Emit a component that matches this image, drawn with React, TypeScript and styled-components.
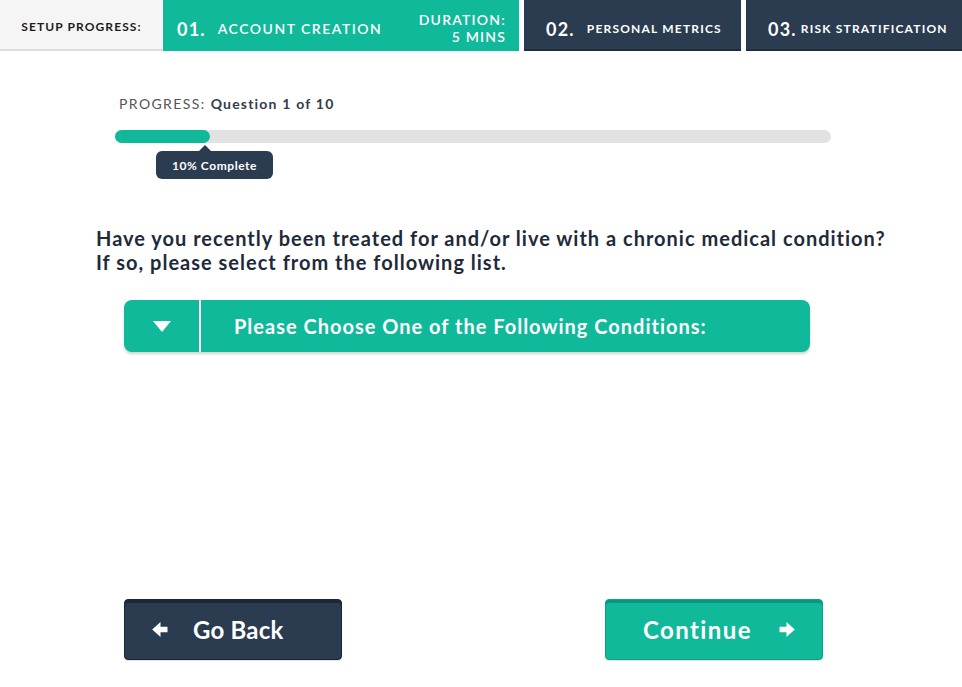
import React from "react";
import styled, { createGlobalStyle } from "styled-components";

const GREEN = "#0fb999";
const NAVY = "#2b3b50";

const Global = createGlobalStyle`
  html, body { margin: 0; padding: 0; background: #ffffff; }
  body { font-family: Lato, "Open Sans", sans-serif; color: #1f2b3a; }
  * { box-sizing: border-box; }
`;

const Page = styled.div`
  width: 962px;
  height: 687px;
  display: flex;
  flex-direction: column;
  overflow: hidden;
`;

const Header = styled.header`
  display: flex;
  height: 51px;
  gap: 5px;
`;

const SetupLabel = styled.div`
  width: 163px;
  background: #f5f5f5;
  box-shadow: inset 0 -2px 0 #dcdcdc;
  display: flex;
  align-items: center;
  justify-content: center;
  padding-top: 2px;
  font-size: 12px;
  font-weight: 700;
  letter-spacing: 1.1px;
  color: #1c1c1c;
  margin-right: -5px;
`;

const Step = styled.div<{ $active?: boolean; $w: number }>`
  width: ${(p) => p.$w}px;
  background: ${(p) => (p.$active ? GREEN : NAVY)};
  box-shadow: inset 0 -2px 0 ${(p) => (p.$active ? GREEN : "#1f2c3d")};
  color: #fff;
  display: flex;
  align-items: center;
  padding: 6px ${(p) => (p.$active ? 13 : 0)}px 0 ${(p) => (p.$active ? 14 : 22)}px;
`;

const StepNum = styled.span<{ $gap?: number }>`
  font-size: 18px;
  font-weight: 700;
  letter-spacing: 1.2px;
  margin-right: ${(p) => p.$gap ?? 12}px;
`;

const StepName = styled.span<{ $big?: boolean }>`
  font-size: ${(p) => (p.$big ? 14 : 12)}px;
  font-weight: ${(p) => (p.$big ? 600 : 700)};
  letter-spacing: ${(p) => (p.$big ? 1.5 : 1.2)}px;
`;

const Duration = styled.div`
  margin-left: auto;
  text-align: right;
  font-size: 14px;
  font-weight: 600;
  line-height: 17px;
  letter-spacing: 1.2px;
  margin-top: -1px;
`;

const Content = styled.main`
  flex: 1;
  display: flex;
  flex-direction: column;
  padding: 0 0 0 96px;
`;

const ProgressBlock = styled.section`
  margin-left: 19px;
  margin-top: 44px;
  width: 716px;
`;

const ProgressLabel = styled.div`
  font-size: 14px;
  letter-spacing: 1.4px;
  color: #555;
  padding-left: 4px;
  line-height: 17px;
  b {
    color: #333c48;
    font-weight: 700;
    letter-spacing: 1.2px;
  }
`;

const Track = styled.div`
  margin-top: 18px;
  height: 13px;
  border-radius: 7px;
  background: #e2e2e2;
  position: relative;
`;

const Fill = styled.div`
  height: 100%;
  border-radius: 7px;
  background: ${GREEN};
`;

const Tip = styled.div`
  position: absolute;
  top: 21px;
  left: 41px;
  width: 117px;
  height: 28px;
  border-radius: 6px;
  background: ${NAVY};
  color: #fff;
  font-size: 12px;
  font-weight: 700;
  letter-spacing: 0.55px;
  display: flex;
  align-items: center;
  justify-content: center;
  &::before {
    content: "";
    position: absolute;
    top: -6px;
    left: 43px;
    border-left: 6px solid transparent;
    border-right: 6px solid transparent;
    border-bottom: 6px solid ${NAVY};
  }
`;

const Question = styled.h2`
  margin: 83px 0 0 0;
  font-size: 20px;
  font-weight: 700;
  line-height: 24px;
  letter-spacing: 1px;
  color: #1e2a3a;
`;

const Select = styled.button`
  margin: 26px 0 0 28px;
  width: 686px;
  height: 52px;
  border: none;
  padding: 0;
  border-radius: 8px;
  background: ${GREEN};
  box-shadow: 0 2px 3px rgba(0, 0, 0, 0.18);
  display: flex;
  align-items: stretch;
  color: #fff;
  font-family: inherit;
  cursor: pointer;
`;

const SelectCaret = styled.span`
  width: 77px;
  border-right: 2px solid #fff;
  display: flex;
  align-items: center;
  justify-content: center;
`;

const SelectText = styled.span`
  display: flex;
  align-items: center;
  padding-left: 33px;
  font-size: 20px;
  font-weight: 700;
  letter-spacing: 1px;
`;

const Actions = styled.div`
  margin-top: auto;
  margin-bottom: 27px;
  margin-left: 28px;
  width: 699px;
  display: flex;
  justify-content: space-between;
`;

const Btn = styled.button<{ $primary?: boolean }>`
  width: 218px;
  height: 61px;
  border-radius: 4px;
  border: 1px solid ${(p) => (p.$primary ? "#0aa386" : "#1b2636")};
  background: ${(p) => (p.$primary ? GREEN : NAVY)};
  box-shadow: inset 0 3px 0 ${(p) => (p.$primary ? "#07997d" : "#1c2838")},
    0 1px 1px rgba(0, 0, 0, 0.12);
  color: #fff;
  font-family: inherit;
  font-size: 24px;
  font-weight: 700;
  letter-spacing: ${(p) => (p.$primary ? 1.4 : 0.2)}px;
  display: flex;
  align-items: center;
  padding: 0 0 0 ${(p) => (p.$primary ? 37 : 27)}px;
  gap: ${(p) => (p.$primary ? 27 : 25)}px;
  cursor: pointer;
`;

const Arrow = ({ dir }: { dir: "left" | "right" }) => (
  <svg
    width="16"
    height="15"
    viewBox="0 0 16 15"
    style={{ transform: dir === "left" ? "scaleX(-1)" : undefined }}
  >
    <path d="M0.5 4.8 H7.5 V0 L15.8 7.5 L7.5 15 V10.2 H0.5 Z" fill="#fff" />
  </svg>
);

export default function App() {
  return (
    <Page>
      <Global />
      <Header>
        <SetupLabel>SETUP PROGRESS:</SetupLabel>
        <Step $active $w={356}>
          <StepNum>01.</StepNum>
          <StepName $big>ACCOUNT CREATION</StepName>
          <Duration>
            DURATION:
            <br />5 MINS
          </Duration>
        </Step>
        <Step $w={217}>
          <StepNum>02.</StepNum>
          <StepName>PERSONAL METRICS</StepName>
        </Step>
        <Step $w={216}>
          <StepNum $gap={4}>03.</StepNum>
          <StepName>RISK STRATIFICATION</StepName>
        </Step>
      </Header>
      <Content>
        <ProgressBlock>
          <ProgressLabel>
            PROGRESS: <b>Question 1 of 10</b>
          </ProgressLabel>
          <Track>
            <Fill style={{ width: `${(95 / 716) * 100}%` }} />
            <Tip>10% Complete</Tip>
          </Track>
        </ProgressBlock>
        <Question>
          Have you recently been treated for and/or live with a chronic medical condition?
          <br />
          If so, please select from the following list.
        </Question>
        <Select>
          <SelectCaret>
            <svg width="18" height="11" viewBox="0 0 18 11">
              <path d="M0 0 H18 L9 11 Z" fill="#fff" />
            </svg>
          </SelectCaret>
          <SelectText>Please Choose One of the Following Conditions:</SelectText>
        </Select>
        <Actions>
          <Btn>
            <Arrow dir="left" />
            Go Back
          </Btn>
          <Btn $primary>
            Continue
            <Arrow dir="right" />
          </Btn>
        </Actions>
      </Content>
    </Page>
  );
}
